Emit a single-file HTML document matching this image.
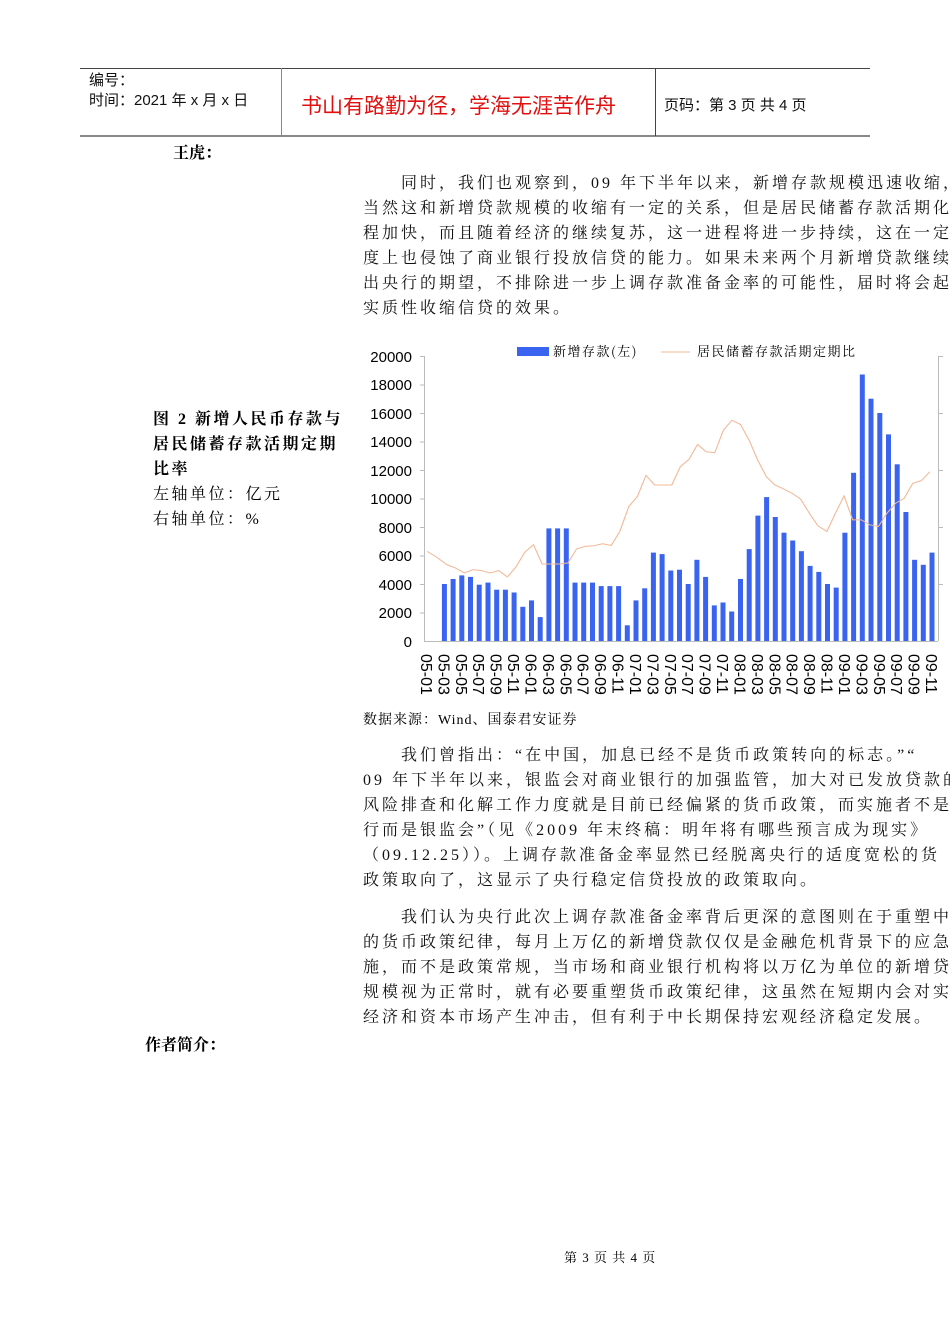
<!DOCTYPE html>
<html><head><meta charset="utf-8"><style>
html,body{margin:0;padding:0;background:#fff;width:950px;height:1344px;overflow:hidden;position:relative}
.a{position:absolute;white-space:nowrap}
.s{font-family:"Liberation Sans","Noto Sans CJK SC",sans-serif}
.r{font-family:"Liberation Serif","Noto Serif CJK SC",serif}
.p{font-family:"Liberation Serif","Noto Serif CJK SC",serif;font-size:16px;letter-spacing:3px;color:#111;line-height:25px}
.b{font-weight:bold}
</style></head><body>
<div class="a" style="left:80px;top:68px;width:790px;border-top:1px solid #444"></div>
<div class="a" style="left:80px;top:135px;width:790px;border-top:2px solid #888"></div>
<div class="a" style="left:281px;top:68px;height:68px;border-left:1px solid #888"></div>
<div class="a" style="left:655px;top:68px;height:68px;border-left:1px solid #444"></div>
<div class="a s" style="left:89px;top:71px;font-size:15px;line-height:20px;color:#111">编号：<br>时间：2021 年 x 月 x 日</div>
<div class="a s" style="left:301px;top:90px;font-size:21px;color:#e01010">书山有路勤为径，学海无涯苦作舟</div>
<div class="a s" style="left:664px;top:94px;font-size:15px;color:#111">页码：第 3 页 共 4 页</div>
<div class="a r b" style="left:173px;top:140px;font-size:16px">王虎：</div>

<div class="a p" style="left:363px;top:171px">
<div>　　同时，我们也观察到，09 年下半年以来，新增存款规模迅速收缩，</div>
<div>当然这和新增贷款规模的收缩有一定的关系，但是居民储蓄存款活期化</div>
<div>程加快，而且随着经济的继续复苏，这一进程将进一步持续，这在一定</div>
<div>度上也侵蚀了商业银行投放信贷的能力。如果未来两个月新增贷款继续</div>
<div>出央行的期望，不排除进一步上调存款准备金率的可能性，届时将会起</div>
<div>实质性收缩信贷的效果。</div>
</div>

<div class="a r" style="left:153px;top:407px;font-size:16px;line-height:25px;letter-spacing:2.5px">
<div class="b">图 2 新增人民币存款与</div>
<div class="b">居民储蓄存款活期定期</div>
<div class="b">比率</div>
<div>左轴单位：亿元</div>
<div>右轴单位：%</div>
</div>

<svg class="a" style="left:0;top:0" width="950" height="720" viewBox="0 0 950 720">
<g font-family="Liberation Sans, sans-serif" font-size="15" fill="#000" text-anchor="end">
<text x="412" y="362">20000</text><text x="412" y="390">18000</text><text x="412" y="419">16000</text><text x="412" y="447">14000</text><text x="412" y="476">12000</text><text x="412" y="504">10000</text><text x="412" y="533">8000</text><text x="412" y="561">6000</text><text x="412" y="590">4000</text><text x="412" y="618">2000</text><text x="412" y="647">0</text>
</g>
<g stroke="#bbb" stroke-width="1">
<line x1="424.5" y1="356" x2="424.5" y2="641"/>
<line x1="424" y1="641.5" x2="938" y2="641.5"/>
<line x1="938.5" y1="356" x2="938.5" y2="641"/>
<path d="M420 356.5h4M420 385h4M420 413.5h4M420 442h4M420 470.5h4M420 499h4M420 527.5h4M420 556h4M420 584.5h4M420 613h4M938 356.5h5M938 413.5h5M938 470.5h5M938 527.5h5M938 584.5h5"/>
</g>
<g fill="#3a64f0">
<rect x="441.9" y="584" width="5" height="57"/><rect x="450.6" y="579" width="5" height="62"/><rect x="459.3" y="575.4" width="5" height="65.6"/><rect x="468" y="576.9" width="5" height="64.1"/><rect x="476.7" y="584.7" width="5" height="56.3"/><rect x="485.5" y="582.6" width="5" height="58.4"/><rect x="494.2" y="589.7" width="5" height="51.3"/><rect x="502.9" y="589.7" width="5" height="51.3"/><rect x="511.6" y="592.5" width="5" height="48.5"/><rect x="520.3" y="606.8" width="5" height="34.2"/><rect x="529" y="600.4" width="5" height="40.6"/><rect x="537.7" y="617.1" width="5" height="23.9"/><rect x="546.4" y="528.4" width="5" height="112.6"/><rect x="555.1" y="528.4" width="5" height="112.6"/><rect x="563.8" y="528.4" width="5" height="112.6"/><rect x="572.5" y="582.6" width="5" height="58.4"/><rect x="581.2" y="582.6" width="5" height="58.4"/><rect x="590" y="582.6" width="5" height="58.4"/><rect x="598.7" y="586.1" width="5" height="54.9"/><rect x="607.4" y="586.1" width="5" height="54.9"/><rect x="616.1" y="586.1" width="5" height="54.9"/><rect x="624.8" y="625.3" width="5" height="15.7"/><rect x="633.5" y="600.4" width="5" height="40.6"/><rect x="642.2" y="588.3" width="5" height="52.7"/><rect x="650.9" y="552.6" width="5" height="88.4"/><rect x="659.6" y="554.1" width="5" height="86.9"/><rect x="668.3" y="570.5" width="5" height="70.5"/><rect x="677" y="569.7" width="5" height="71.3"/><rect x="685.7" y="584" width="5" height="57"/><rect x="694.4" y="559.8" width="5" height="81.2"/><rect x="703.1" y="576.9" width="5" height="64.1"/><rect x="711.8" y="605.4" width="5" height="35.6"/><rect x="720.5" y="602.5" width="5" height="38.5"/><rect x="729.2" y="611.5" width="5" height="29.5"/><rect x="738" y="579" width="5" height="62"/><rect x="746.7" y="549.1" width="5" height="91.9"/><rect x="755.4" y="515.6" width="5" height="125.4"/><rect x="764.1" y="497.1" width="5" height="143.9"/><rect x="772.8" y="517" width="5" height="124"/><rect x="781.5" y="532.7" width="5" height="108.3"/><rect x="790.2" y="540.5" width="5" height="100.5"/><rect x="798.9" y="551.2" width="5" height="89.8"/><rect x="807.6" y="565.9" width="5" height="75.1"/><rect x="816.3" y="571.9" width="5" height="69.1"/><rect x="825" y="584" width="5" height="57"/><rect x="833.7" y="587.6" width="5" height="53.4"/><rect x="842.4" y="532.7" width="5" height="108.3"/><rect x="851.1" y="472.8" width="5" height="168.2"/><rect x="859.8" y="374.5" width="5" height="266.5"/><rect x="868.5" y="398.7" width="5" height="242.3"/><rect x="877.3" y="413" width="5" height="228"/><rect x="886" y="434.4" width="5" height="206.6"/><rect x="894.7" y="464.3" width="5" height="176.7"/><rect x="903.4" y="512" width="5" height="129"/><rect x="912.1" y="559.8" width="5" height="81.2"/><rect x="920.8" y="564.8" width="5" height="76.2"/><rect x="929.5" y="552.6" width="5" height="88.4"/>
</g>
<g transform="translate(427,641) scale(0.3737,0.332) translate(-175,-905)">
<polyline fill="none" stroke="#f2b898" stroke-width="3" points="175,635 198,650 228,675 251,685 275,700 298,690 321,693 344,700 367,693 390,712 413,682 437,637 460,615 483,673 506,673 529,673 552,670 575,628 598,620 621,618 645,612 668,617 691,575 715,500 738,470 761,406 784,435 807,435 830,435 853,380 876,358 899,313 922,335 945,338 968,270 991,240 1014,253 1037,300 1060,360 1083,410 1106,435 1129,447 1152,460 1175,478 1198,520 1221,558 1245,575 1268,520 1291,468 1314,540 1337,540 1360,555 1383,560 1406,520 1429,490 1452,475 1475,430 1498,422 1521,395"/>
</g>
<rect x="517" y="347" width="32" height="9" fill="#3a64f0"/>
<text x="553" y="356" font-family="Noto Serif CJK SC, serif" font-size="13" letter-spacing="1.5">新增存款(左)</text>
<line x1="661" y1="352" x2="690" y2="352" stroke="#f2b898" stroke-width="1"/>
<text x="697" y="356" font-family="Noto Serif CJK SC, serif" font-size="13" letter-spacing="1.5">居民储蓄存款活期定期比</text>
<g font-family="Liberation Sans, sans-serif" font-size="16" fill="#000">
<text transform="translate(421,654) rotate(90)">05-01</text><text transform="translate(438.4,654) rotate(90)">05-03</text><text transform="translate(455.8,654) rotate(90)">05-05</text><text transform="translate(473.2,654) rotate(90)">05-07</text><text transform="translate(490.7,654) rotate(90)">05-09</text><text transform="translate(508.1,654) rotate(90)">05-11</text><text transform="translate(525.5,654) rotate(90)">06-01</text><text transform="translate(542.9,654) rotate(90)">06-03</text><text transform="translate(560.3,654) rotate(90)">06-05</text><text transform="translate(577.7,654) rotate(90)">06-07</text><text transform="translate(595.1,654) rotate(90)">06-09</text><text transform="translate(612.6,654) rotate(90)">06-11</text><text transform="translate(630,654) rotate(90)">07-01</text><text transform="translate(647.4,654) rotate(90)">07-03</text><text transform="translate(664.8,654) rotate(90)">07-05</text><text transform="translate(682.2,654) rotate(90)">07-07</text><text transform="translate(699.6,654) rotate(90)">07-09</text><text transform="translate(717,654) rotate(90)">07-11</text><text transform="translate(734.5,654) rotate(90)">08-01</text><text transform="translate(751.9,654) rotate(90)">08-03</text><text transform="translate(769.3,654) rotate(90)">08-05</text><text transform="translate(786.7,654) rotate(90)">08-07</text><text transform="translate(804.1,654) rotate(90)">08-09</text><text transform="translate(821.5,654) rotate(90)">08-11</text><text transform="translate(838.9,654) rotate(90)">09-01</text><text transform="translate(856.4,654) rotate(90)">09-03</text><text transform="translate(873.8,654) rotate(90)">09-05</text><text transform="translate(891.2,654) rotate(90)">09-07</text><text transform="translate(908.6,654) rotate(90)">09-09</text><text transform="translate(926,654) rotate(90)">09-11</text>
</g>
</svg>

<div class="a r" style="left:363px;top:709px;font-size:14px;letter-spacing:1px">数据来源：Wind、国泰君安证券</div>

<div class="a p" style="left:363px;top:743px">
<div>　　我们曾指出：“在中国，加息已经不是货币政策转向的标志。”“</div>
<div>09 年下半年以来，银监会对商业银行的加强监管，加大对已发放贷款的</div>
<div>风险排查和化解工作力度就是目前已经偏紧的货币政策，而实施者不是</div>
<div>行而是银监会”（见《2009 年末终稿：明年将有哪些预言成为现实》</div>
<div>（09.12.25））。上调存款准备金率显然已经脱离央行的适度宽松的货</div>
<div>政策取向了，这显示了央行稳定信贷投放的政策取向。</div>
</div>
<div class="a p" style="left:363px;top:905px">
<div>　　我们认为央行此次上调存款准备金率背后更深的意图则在于重塑中</div>
<div>的货币政策纪律，每月上万亿的新增贷款仅仅是金融危机背景下的应急</div>
<div>施，而不是政策常规，当市场和商业银行机构将以万亿为单位的新增贷</div>
<div>规模视为正常时，就有必要重塑货币政策纪律，这虽然在短期内会对实</div>
<div>经济和资本市场产生冲击，但有利于中长期保持宏观经济稳定发展。</div>
</div>
<div class="a r b" style="left:145px;top:1032px;font-size:16px">作者简介：</div>
<div class="a r" style="left:564px;top:1247px;font-size:13px;letter-spacing:1px">第 3 页 共 4 页</div>
</body></html>
